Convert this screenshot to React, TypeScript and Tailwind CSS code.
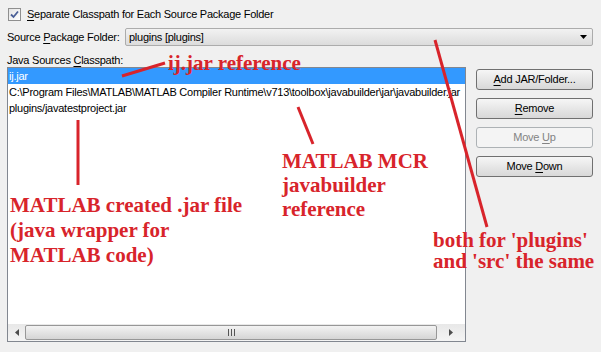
import React from 'react';

const ui = { fontFamily: '"Liberation Sans", Arial, sans-serif' };
const note = { fontFamily: '"Liberation Serif", "Times New Roman", serif' };

const Mn = ({ children }: { children: React.ReactNode }) => <span className="underline underline-offset-2">{children}</span>;

const Btn = ({ children, disabled }: { children: React.ReactNode; disabled?: boolean }) => (
  <div
    className={
      disabled
        ? 'flex h-[21px] items-center justify-center rounded-[3px] border border-[#adb2b5] bg-[#f4f4f4] text-[#838383]'
        : 'flex h-[21px] items-center justify-center rounded-[3px] border border-[#707070] bg-gradient-to-b from-[#f6f6f6] to-[#d8d8d8] text-black'
    }
  >
    {children}
  </div>
);

export default function App() {
  return (
    <div className="relative h-[352px] w-[601px] overflow-hidden whitespace-nowrap bg-[#f0f0f0] pl-[7px] pr-[8px] pt-[6px] text-[11px] tracking-[-0.25px] text-black" style={ui}>
      {/* checkbox */}
      <div className="flex h-[16px] items-center gap-[6px] pl-[1px]">
        <div className="flex h-[13px] w-[13px] items-center justify-center border border-[#8f8f8f] bg-gradient-to-br from-[#e4e4e4] to-white">
          <svg width="9" height="9" viewBox="0 0 9 9">
            <path d="M1 4.5 L3.5 7 L8 1.5" fill="none" stroke="#4a5f97" strokeWidth="1.8" />
          </svg>
        </div>
        <span>
          <Mn>S</Mn>eparate Classpath for Each Source Package Folder
        </span>
      </div>

      {/* source package folder */}
      <div className="mt-[6px] flex h-[18px] items-center">
        <span className="w-[118px]">
          Source <Mn>P</Mn>ackage Folder:
        </span>
        <div className="flex h-[18px] flex-1 items-center justify-between rounded-[2px] border border-[#acacac] bg-gradient-to-b from-[#f2f2f2] to-[#dcdcdc] pl-[3px] pr-[5px]">
          <span>plugins [plugins]</span>
          <svg width="7" height="4" viewBox="0 0 7 4">
            <path d="M0 0 H7 L3.5 4 Z" fill="#000" />
          </svg>
        </div>
      </div>

      <div className="mt-[7px] flex h-[14px] items-center">
        <span>
          Java Sources <Mn>C</Mn>lasspath:
        </span>
      </div>

      <div className="flex gap-[10px]">
        {/* list */}
        <div className="flex h-[275px] w-[459px] flex-col border border-[#828790] bg-white">
          <div className="flex-1 overflow-hidden">
            <div className="flex h-[16px] items-center bg-[#3399ff] pl-[1px] text-white">ij.jar</div>
            <div className="flex h-[16px] items-center pl-[1px]">
              C:\Program Files\MATLAB\MATLAB Compiler Runtime\v713\toolbox\javabuilder\jar\javabuilder.jar
            </div>
            <div className="flex h-[16px] items-center pl-[1px]">plugins/javatestproject.jar</div>
          </div>
          {/* horizontal scrollbar */}
          <div className="flex h-[17px] items-center bg-gradient-to-b from-[#e8e8e8] to-[#f4f4f4]">
            <div className="flex w-[17px] items-center justify-center">
              <svg width="4" height="7" viewBox="0 0 4 7">
                <path d="M4 0 V7 L0 3.5 Z" fill="#4d4d4d" />
              </svg>
            </div>
            <div className="flex h-[15px] w-[412px] items-center justify-center rounded-[2px] border border-[#979797] bg-gradient-to-b from-[#f3f3f3] to-[#d5d5d5]">
              <svg width="7" height="7" viewBox="0 0 7 7">
                <path d="M0.5 0 V7 M3.5 0 V7 M6.5 0 V7" stroke="#555" strokeWidth="1" />
              </svg>
            </div>
            <div className="flex flex-1 items-center justify-center">
              <svg width="4" height="7" viewBox="0 0 4 7">
                <path d="M0 0 V7 L4 3.5 Z" fill="#4d4d4d" />
              </svg>
            </div>
          </div>
        </div>

        {/* buttons */}
        <div className="flex w-[117px] flex-col gap-[8px] pt-[2px]">
          <Btn>
            <span>
              <Mn>A</Mn>dd JAR/Folder...
            </span>
          </Btn>
          <Btn>
            <span>
              <Mn>R</Mn>emove
            </span>
          </Btn>
          <Btn disabled>
            <span>
              Move <Mn>U</Mn>p
            </span>
          </Btn>
          <Btn>
            <span>
              Move <Mn>D</Mn>own
            </span>
          </Btn>
        </div>
      </div>

      {/* annotations */}
      <svg className="pointer-events-none absolute inset-0" width="601" height="352">
        <g stroke="#d8242b" strokeWidth="3" strokeLinecap="butt">
          <line x1="122" y1="76" x2="165" y2="63" />
          <line x1="78" y1="120" x2="78" y2="185" />
          <line x1="298" y1="107" x2="313" y2="144" />
          <line x1="435" y1="40" x2="487" y2="227" />
        </g>
      </svg>
      <div className="pointer-events-none absolute left-[168px] top-[51px] text-[21px] font-bold leading-[25px] tracking-normal text-[#d8242b]" style={note}>
        ij.jar reference
      </div>
      <div className="pointer-events-none absolute left-[10px] top-[193px] text-[21px] font-bold leading-[25px] tracking-normal text-[#d8242b]" style={note}>
        MATLAB created .jar file
        <br />
        (java wrapper for
        <br />
        MATLAB code)
      </div>
      <div className="pointer-events-none absolute left-[282px] top-[149px] text-[21px] font-bold leading-[24px] tracking-normal text-[#d8242b]" style={note}>
        MATLAB MCR
        <br />
        javabuilder
        <br />
        reference
      </div>
      <div className="pointer-events-none absolute left-[433px] top-[230px] text-[21px] font-bold leading-[21px] tracking-normal text-[#d8242b]" style={note}>
        both for 'plugins'
        <br />
        and 'src' the same
      </div>
    </div>
  );
}
